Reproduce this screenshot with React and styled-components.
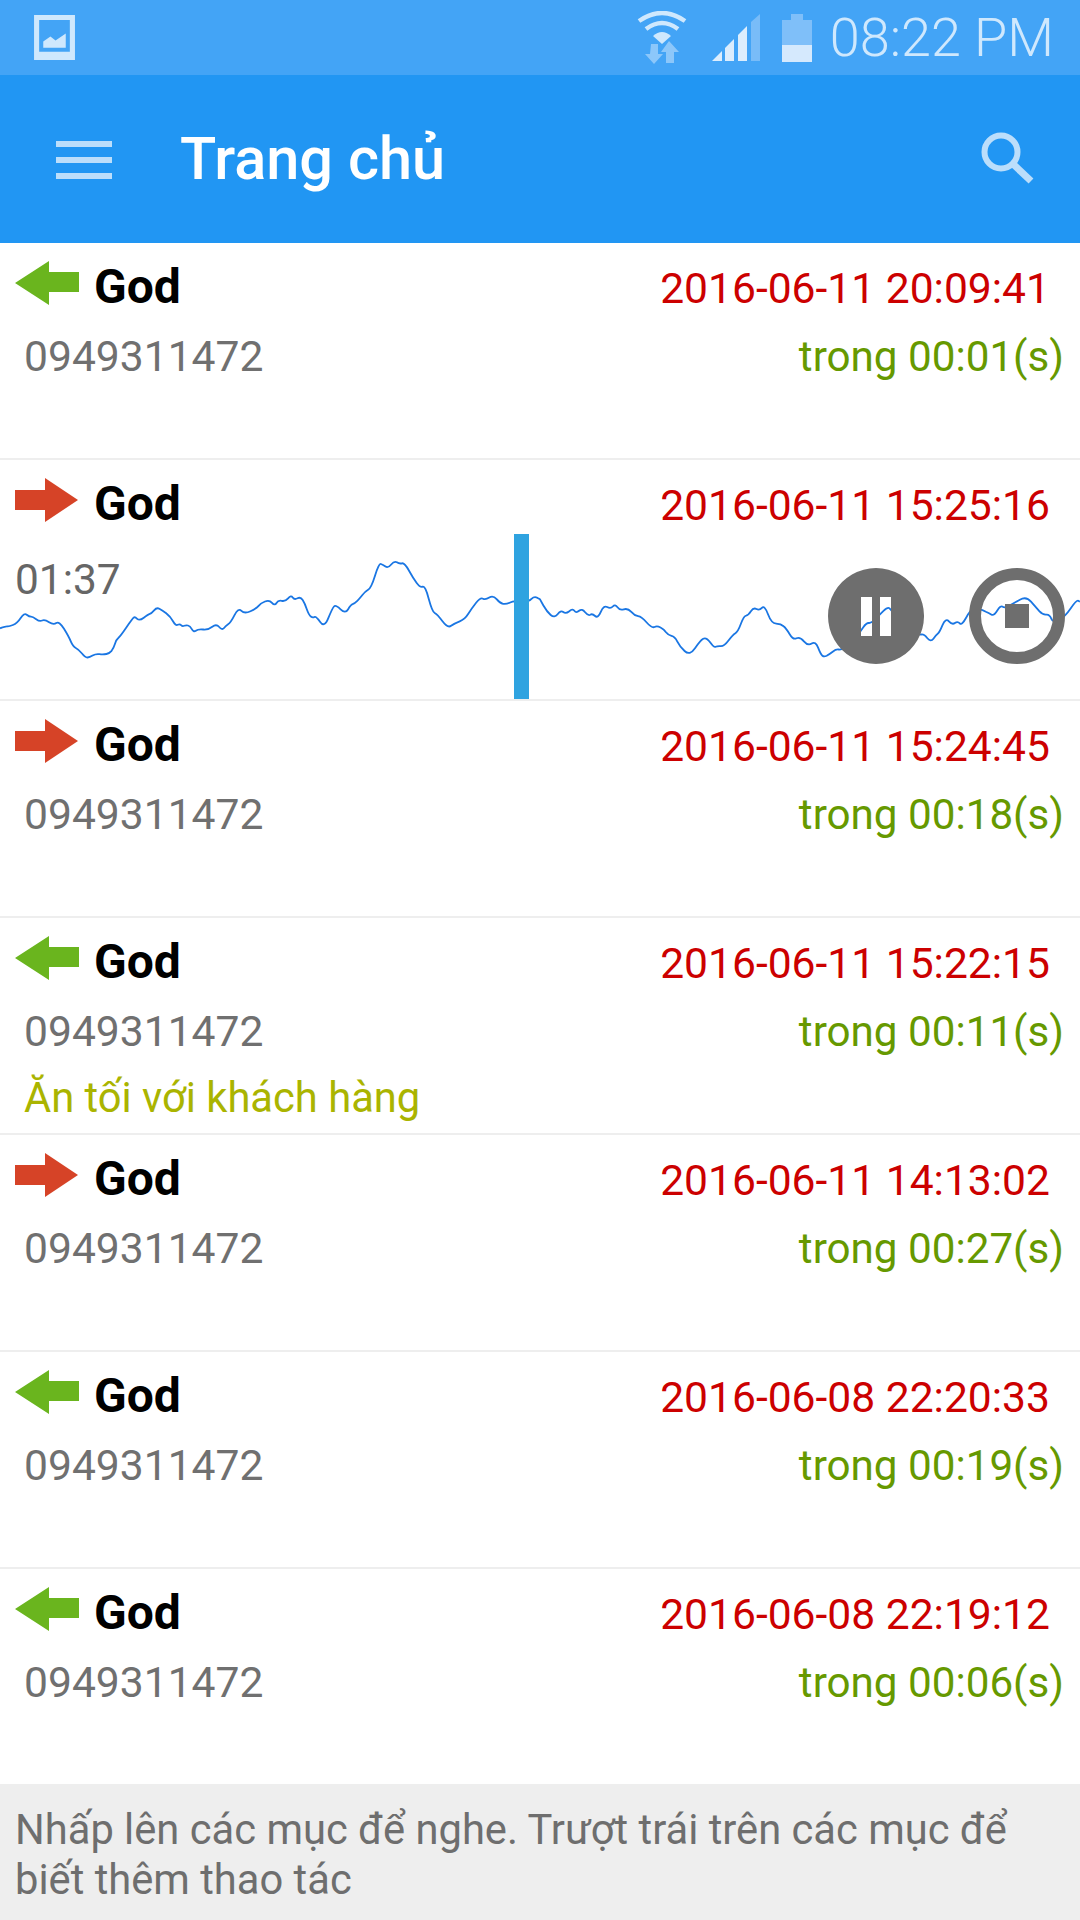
import React from "react";
import styled, { createGlobalStyle } from "styled-components";

const GlobalStyle = createGlobalStyle`
  html, body {
    margin: 0;
    padding: 0;
    background: #fff;
    font-family: Roboto, "Liberation Sans", sans-serif;
  }
`;

const Page = styled.div`
  width: 1080px;
  height: 1920px;
  display: flex;
  flex-direction: column;
  overflow: hidden;
`;

const StatusBar = styled.div`
  height: 75px;
  flex: none;
  background: #43a4f6;
  display: flex;
  align-items: center;
  padding: 0 26px 0 34px;
`;

const StatusIcons = styled.div`
  margin-left: auto;
  display: flex;
  align-items: center;
  gap: 22px;
`;

const Clock = styled.span`
  font-size: 54px;
  font-weight: 300;
  line-height: 75px;
  color: #cfe8fd;
  margin-left: -4px;
`;

const AppBar = styled.div`
  height: 168px;
  flex: none;
  background: #2196f3;
  display: flex;
  align-items: center;
  padding: 0 45px 0 56px;
`;

const MenuIcon = styled.div`
  width: 56px;
  height: 38px;
  display: flex;
  flex-direction: column;
  justify-content: space-between;
  margin-top: 1px;
  span {
    height: 6px;
    background: #bbdefb;
  }
`;

const Title = styled.h1`
  margin: 0 0 0 68px;
  font-size: 59.5px;
  font-weight: 500;
  color: #fff;
  flex: 1;
`;

const List = styled.div`
  flex: 1;
  display: flex;
  flex-direction: column;
`;

const Row = styled.div`
  height: ${(p) => (p.$playing ? 239 : 215)}px;
  flex: none;
  border-bottom: 2px solid #eeeeee;
  position: relative;
  overflow: hidden;
`;

const TopLine = styled.div`
  height: 80px;
  display: flex;
  align-items: center;
  padding: 0 30px 0 15px;
`;

const Name = styled.span`
  font-size: 48px;
  font-weight: 700;
  color: #000;
  margin-left: 15px;
  margin-top: 6px;
`;

const CallDate = styled.span`
  margin-left: auto;
  margin-top: 10px;
  font-size: 42.6px;
  color: #cc0000;
`;

const InfoLine = styled.div`
  display: flex;
  justify-content: space-between;
  padding: 0 16px 0 24px;
  height: 66px;
  align-items: center;
`;

const Phone = styled.span`
  font-size: 42.6px;
  color: #707070;
`;

const Duration = styled.span`
  font-size: 42.2px;
  color: #669900;
`;

const Note = styled.div`
  font-size: 41.7px;
  line-height: 50px;
  color: #aab400;
  padding-left: 24px;
  margin-top: 9px;
`;

const Elapsed = styled.div`
  font-size: 42.4px;
  line-height: 50px;
  color: #666666;
  padding-left: 15px;
  margin-top: 15px;
`;

const Wave = styled.svg`
  position: absolute;
  left: 0;
  top: 1px;
  width: 1080px;
  height: 239px;
`;

const Cursor = styled.div`
  position: absolute;
  left: 514px;
  top: 74px;
  bottom: 0;
  width: 15px;
  background: #2fa3e0;
`;

const PlayerButton = styled.svg`
  position: absolute;
  top: 108px;
  left: ${(p) => p.$left}px;
  width: 96px;
  height: 96px;
`;

const Footer = styled.div`
  height: 136px;
  flex: none;
  box-sizing: border-box;
  background: #eeeeee;
  padding: 19px 40px 0 15px;
  font-size: 41.7px;
  line-height: 50px;
  color: #6e6e6e;
`;

const leftWave = [[0,325],[18,318],[25,320],[50,310],[70,278],[85,290],[95,290],[115,305],[130,298],[155,315],[172,303],[200,350],[212,380],[228,388],[248,413],[260,412],[278,401],[300,404],[318,400],[330,385],[338,358],[350,348],[385,295],[392,290],[405,303],[430,283],[440,280],[455,262],[470,270],[495,290],[510,318],[522,311],[530,320],[540,315],[552,318],[562,337],[575,327],[605,330],[628,311],[645,331],[655,318],[670,308],[692,263],[710,282],[745,265],[757,250],[782,239],[798,258],[808,240],[828,245],[845,225],[855,240],[873,230],[885,250],[897,285],[908,294],[918,288],[942,324],[965,265],[975,254],[1003,282],[1018,255],[1030,250],[1045,235],[1060,215],[1078,204],[1100,130],[1112,134],[1127,145],[1145,122],[1160,132],[1175,128],[1200,175],[1220,203],[1235,197],[1255,275],[1270,283],[1300,325],[1320,310],[1350,298],[1370,265],[1395,232],[1410,240],[1432,225],[1452,250],[1470,253],[1490,243],[1510,245],[1535,245],[1552,228],[1568,238]];

const rightWave = [[0,238],[20,275],[42,295],[60,270],[75,282],[95,265],[105,280],[122,265],[140,288],[152,280],[168,296],[185,255],[205,267],[218,252],[232,272],[255,264],[275,287],[295,290],[325,325],[340,317],[360,328],[372,345],[392,350],[405,378],[435,408],[465,362],[483,351],[505,383],[515,378],[535,379],[560,344],[575,335],[592,288],[605,286],[620,262],[637,272],[652,255],[672,310],[700,312],[715,325],[735,360],[755,350],[778,378],[800,363],[815,403],[825,411],[840,403],[860,387],[875,390],[905,370],[930,335],[948,308],[962,310],[985,285],[1010,260],[1020,270],[1060,320],[1100,345],[1115,342],[1135,367],[1150,345],[1160,338],[1178,293],[1197,315],[1213,303],[1225,317],[1250,270],[1265,265],[1285,270],[1305,280],[1318,288],[1338,255],[1350,265],[1375,250],[1412,228],[1440,262],[1460,285],[1480,283],[1490,310],[1525,290],[1558,240],[1568,245]];

// points were read off two crops, scale them back to row pixels
const scale = (list, offset) => list.map(([x, y]) => [offset + x / 2.904, 59 + y / 3]);

// smooth the line through the midpoints
const smoothPath = (pts) => {
  let d = `M${pts[0][0].toFixed(1)} ${pts[0][1].toFixed(1)}`;
  for (let i = 1; i < pts.length - 1; i++) {
    const mx = (pts[i][0] + pts[i + 1][0]) / 2;
    const my = (pts[i][1] + pts[i + 1][1]) / 2;
    d += ` Q${pts[i][0].toFixed(1)} ${pts[i][1].toFixed(1)} ${mx.toFixed(1)} ${my.toFixed(1)}`;
  }
  const last = pts[pts.length - 1];
  return `${d} L${last[0].toFixed(1)} ${last[1].toFixed(1)}`;
};

const wavePath = smoothPath([...scale(leftWave, 0), ...scale(rightWave, 540)]);

const calls = [
  { dir: "in", date: "2016-06-11 20:09:41", time: "00:01" },
  { dir: "out", date: "2016-06-11 15:25:16", playing: true },
  { dir: "out", date: "2016-06-11 15:24:45", time: "00:18" },
  { dir: "in", date: "2016-06-11 15:22:15", time: "00:11", note: "Ăn tối với khách hàng" },
  { dir: "out", date: "2016-06-11 14:13:02", time: "00:27" },
  { dir: "in", date: "2016-06-08 22:20:33", time: "00:19" },
  { dir: "in", date: "2016-06-08 22:19:12", time: "00:06" },
];

const ArrowIcon = ({ dir }) => (
  <svg width="64" height="44" viewBox="0 0 64 44" style={{ flex: "none" }}>
    {dir === "in" ? (
      <path d="M0 22 L34 0 V11 H64 V31 H34 V44 Z" fill="#6ab51e" />
    ) : (
      <path d="M0 12 H30 V0 L63 22 L30 44 V32 H0 Z" fill="#d64327" />
    )}
  </svg>
);

const ImageIcon = () => (
  <svg width="41" height="45" viewBox="0 0 40 44">
    <path fillRule="evenodd" d="M0 0H40V44H0Z M5 5V36H35V5Z" fill="#cfe8fd" />
    <path d="M9 32V26L16 21L21 25L31 18V32Z" fill="#cfe8fd" />
  </svg>
);

const WifiIcon = () => (
  <svg width="50" height="54" viewBox="0 0 50 54" fill="none" style={{ marginRight: 3 }}>
    <g stroke="#cfe8fd" strokeWidth="4.5">
      <path d="M2 10 Q25 -6 48 10" />
      <path d="M9 18 Q25 6 41 18" />
    </g>
    <path d="M16 25 Q25 17 34 25 L25 33Z" fill="#cfe8fd" />
    <path d="M17 34h7v10h5l-9 10l-9-10h5z" transform="translate(-3 -1)" fill="#8cc7fa" />
    <path d="M30 30l10 11h-5v11h-8v-11h-5z" transform="translate(2 0)" fill="#8cc7fa" />
  </svg>
);

const SignalIcon = () => (
  <svg width="48" height="48" viewBox="0 0 48 48">
    <path d="M0 47L10 37V47Z" fill="#dcedfd" />
    <path d="M13 34L22 25V47H13Z" fill="#dcedfd" />
    <path d="M26 21L35 12V47H26Z" fill="#dcedfd" />
    <path d="M39 8L48 0V47H39Z" fill="#79bcf8" />
  </svg>
);

const BatteryIcon = () => (
  <svg width="30" height="48" viewBox="0 0 30 48">
    <path d="M0 6H9V0H21V6H30V31H0Z" fill="#7fbff9" />
    <path d="M0 31H30V48H0Z" fill="#d5e9fd" />
  </svg>
);

const SearchIcon = () => (
  <svg width="56" height="56" viewBox="0 0 56 56" fill="none" stroke="#bbdefb">
    <circle cx="22" cy="21" r="16.5" strokeWidth="6" />
    <path d="M34 33L52 50" strokeWidth="7" />
  </svg>
);

const PauseIcon = () => (
  <PlayerButton $left={828} viewBox="0 0 96 96">
    <path
      fillRule="evenodd"
      fill="#6e6e6e"
      d="M48 0a48 48 0 1 0 0.01 0Z M33 29V68H44V29Z M52 29V68H63V29Z"
    />
  </PlayerButton>
);

const StopIcon = () => (
  <PlayerButton $left={969} viewBox="0 0 96 96">
    <circle cx="48" cy="48" r="42" fill="none" stroke="#6e6e6e" strokeWidth="12" />
    <rect x="36" y="36" width="24" height="24" fill="#6e6e6e" />
  </PlayerButton>
);

const CallRow = ({ call }) => (
  <Row $playing={call.playing}>
    <TopLine>
      <ArrowIcon dir={call.dir} />
      <Name>God</Name>
      <CallDate>{call.date}</CallDate>
    </TopLine>
    {call.playing ? (
      <>
        <Elapsed>01:37</Elapsed>
        <Wave viewBox="0 0 1080 239">
          <path d={wavePath} fill="none" stroke="#1a76e3" strokeWidth="1.8" />
        </Wave>
        <Cursor />
        <PauseIcon />
        <StopIcon />
      </>
    ) : (
      <>
        <InfoLine>
          <Phone>0949311472</Phone>
          <Duration>trong {call.time}(s)</Duration>
        </InfoLine>
        {call.note && <Note>{call.note}</Note>}
      </>
    )}
  </Row>
);

const App = () => (
  <Page>
    <GlobalStyle />
    <StatusBar>
      <ImageIcon />
      <StatusIcons>
        <WifiIcon />
        <SignalIcon />
        <BatteryIcon />
        <Clock>08:22 PM</Clock>
      </StatusIcons>
    </StatusBar>
    <AppBar>
      <MenuIcon>
        <span />
        <span />
        <span />
      </MenuIcon>
      <Title>Trang chủ</Title>
      <SearchIcon />
    </AppBar>
    <List>
      {calls.map((call) => (
        <CallRow key={call.date} call={call} />
      ))}
    </List>
    <Footer>Nhấp lên các mục để nghe. Trượt trái trên các mục để biết thêm thao tác</Footer>
  </Page>
);

export default App;
